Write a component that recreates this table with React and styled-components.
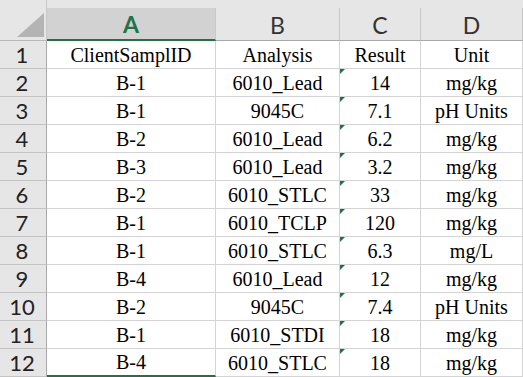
import React from "react";
import styled, { createGlobalStyle } from "styled-components";

const Global = createGlobalStyle`
  html, body { margin: 0; padding: 0; background: #ffffff; }
  body { width: 523px; height: 377px; overflow: hidden; }
`;

const rows = [
  ["ClientSamplID", "Analysis", "Result", "Unit"],
  ["B-1", "6010_Lead", "14", "mg/kg"],
  ["B-1", "9045C", "7.1", "pH Units"],
  ["B-2", "6010_Lead", "6.2", "mg/kg"],
  ["B-3", "6010_Lead", "3.2", "mg/kg"],
  ["B-2", "6010_STLC", "33", "mg/kg"],
  ["B-1", "6010_TCLP", "120", "mg/kg"],
  ["B-1", "6010_STLC", "6.3", "mg/L"],
  ["B-4", "6010_Lead", "12", "mg/kg"],
  ["B-2", "9045C", "7.4", "pH Units"],
  ["B-1", "6010_STDI", "18", "mg/kg"],
  ["B-4", "6010_STLC", "18", "mg/kg"],
];

const Sheet = styled.div`
  background: #e6e6e6;
  padding-top: 8px;
  width: 523px;
  height: 377px;
  overflow: hidden;
  box-sizing: border-box;
`;

const Grid = styled.div`
  display: grid;
  grid-template-columns: 47px 169px 124px 81px 102px;
  grid-template-rows: 33px repeat(12, 28px);
`;

const Corner = styled.div`
  display: flex;
  align-items: flex-end;
  justify-content: flex-end;
  padding: 0 2px 3px 0;
  border-bottom: 1px solid #b8b8b8;
  border-right: 1px solid #c8c8c8;
  box-sizing: border-box;
  margin-top: -8px;
  height: 41px;
`;

const ColHead = styled.div`
  display: flex;
  align-items: center;
  justify-content: center;
  box-sizing: border-box;
  font-family: Lato, "Open Sans", sans-serif;
  font-size: 23px;
  padding-top: 1px;
  background: ${(p) => (p.$selected ? "#d2d2d2" : "#e6e6e6")};
  color: ${(p) => (p.$selected ? "#217346" : "#333333")};
  font-weight: ${(p) => (p.$selected ? 700 : 400)};
  border-right: 1px solid #c8c8c8;
  border-bottom: ${(p) => (p.$selected ? "2px solid #217346" : "1px solid #a8a8a8")};
`;

const RowHead = styled.div`
  display: flex;
  align-items: center;
  justify-content: center;
  box-sizing: border-box;
  font-family: Lato, "Open Sans", sans-serif;
  font-size: 22px;
  color: #222222;
  background: #e6e6e6;
  border-right: 1px solid #a8a8a8;
  border-bottom: 1px solid #c4c4c4;
  padding-right: 2px;
`;

const Cell = styled.div`
  position: relative;
  display: flex;
  align-items: flex-end;
  justify-content: center;
  box-sizing: border-box;
  background: #ffffff;
  font-family: "Liberation Serif", "Times New Roman", serif;
  font-size: 20px;
  line-height: 1.15;
  color: #000000;
  padding-bottom: 1px;
  white-space: nowrap;
  border-right: 1px solid #d4d4d4;
  border-bottom: ${(p) => (p.$lastSel ? "2px solid #217346" : "1px solid #d4d4d4")};
`;

const Flag = styled.span`
  position: absolute;
  top: 0;
  left: 0;
  width: 0;
  height: 0;
  border-top: 5px solid #1e7145;
  border-right: 5px solid transparent;
`;

export default function App() {
  return (
    <>
      <Global />
      <Sheet>
        <Grid>
          <Corner>
            <svg width="27" height="24" viewBox="0 0 27 24">
              <polygon points="27,0 27,24 0,24" fill="#b4b4b4" />
            </svg>
          </Corner>
          {["A", "B", "C", "D"].map((l, i) => (
            <ColHead key={l} $selected={i === 0}>
              {l}
            </ColHead>
          ))}
          {rows.map((r, ri) => (
            <React.Fragment key={ri}>
              <RowHead>{ri + 1}</RowHead>
              {r.map((v, ci) => (
                <Cell key={ci} $lastSel={ci === 0 && ri === rows.length - 1}>
                  {ci === 2 && ri > 0 && <Flag />}
                  {v}
                </Cell>
              ))}
            </React.Fragment>
          ))}
        </Grid>
      </Sheet>
    </>
  );
}
